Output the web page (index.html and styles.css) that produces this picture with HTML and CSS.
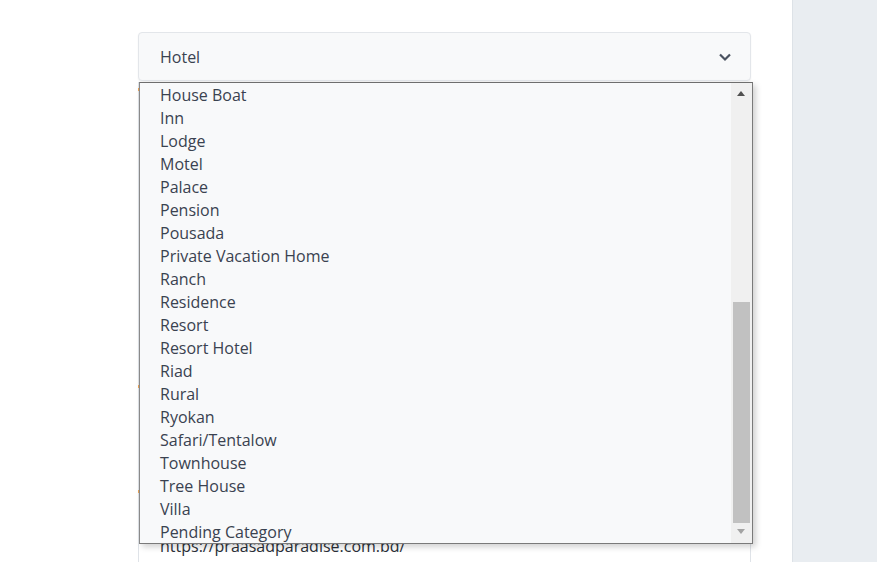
FILE: index.html
```html
<!DOCTYPE html>
<html>
<head>
<meta charset="utf-8">
<link rel="stylesheet" href="styles.css">
</head>
<body>
<div class="page">
  <main class="main">
    <div class="form">
      <div class="select">
        <span>Hotel</span>
        <svg class="chev" width="14" height="10" viewBox="0 0 14 10"><path d="M2 2.5 L7 7.5 L12 2.5" fill="none" stroke="#4a5260" stroke-width="2.2"/></svg>
      </div>
      <div class="field">
        <span class="mark m1"></span>
        <span class="mark m2"></span>
        <span class="mark m3"></span>
        <div class="input">https://praasadparadise.com.bd/</div>
      </div>
      <div class="dropdown">
        <ul class="list">
          <li>House Boat</li>
          <li>Inn</li>
          <li>Lodge</li>
          <li>Motel</li>
          <li>Palace</li>
          <li>Pension</li>
          <li>Pousada</li>
          <li>Private Vacation Home</li>
          <li>Ranch</li>
          <li>Residence</li>
          <li>Resort</li>
          <li>Resort Hotel</li>
          <li>Riad</li>
          <li>Rural</li>
          <li>Ryokan</li>
          <li>Safari/Tentalow</li>
          <li>Townhouse</li>
          <li>Tree House</li>
          <li>Villa</li>
          <li>Pending Category</li>
        </ul>
        <div class="scrollbar">
          <div class="arrow up"></div>
          <div class="track"><div class="thumb"></div></div>
          <div class="arrow down"></div>
        </div>
      </div>
    </div>
  </main>
  <aside class="side"></aside>
</div>
</body>
</html>
```
FILE: styles.css
```css
* { box-sizing: border-box; }
html, body { margin: 0; padding: 0; }
body {
  font-family: "Open Sans", "Liberation Sans", sans-serif;
  color: #3a4250;
  background: #fff;
  width: 877px;
  height: 562px;
  overflow: hidden;
}
.page {
  display: flex;
  height: 562px;
}
.main {
  flex: 0 0 793px;
  border-right: 1px solid #dde2e7;
  padding: 32px 0 0 138px;
}
.side {
  flex: 1;
  background: #e9edf1;
}
.form {
  position: relative;
  width: 613px;
}
.select {
  height: 49px;
  background: #f8f9fa;
  border: 1px solid #e3e6ea;
  border-radius: 4px;
  display: flex;
  align-items: center;
  justify-content: space-between;
  padding: 1px 18px 0 21px;
  font-size: 16px;
  box-shadow: 0 1px 2px rgba(0,0,0,0.06);
}
.chev { display: block; }
.field {
  position: relative;
  margin-top: 1px;
  height: 480px;
  border-left: 1px solid #dfe3e8;
  border-right: 1px solid #dfe3e8;
  display: flex;
  flex-direction: column;
  justify-content: flex-end;
}
.input {
  padding-left: 21px;
  font-size: 16px;
  line-height: 22px;
  margin-bottom: 5px;
  color: #2a2f38;
}
.mark {
  position: absolute;
  left: -1px;
  width: 2px;
  height: 3px;
  background: #e7a35a;
}
.m1 { top: 6px; }
.m2 { top: 303px; }
.m3 { top: 408px; }
.dropdown {
  position: absolute;
  left: 1px;
  top: 50px;
  width: 614px;
  height: 462px;
  background: #f8f9fa;
  border: 1px solid #7a7a7a;
  border-top-color: #6e6e6e;
  border-left-color: #8a8a8a;
  box-shadow: 3px 3px 6px rgba(0,0,0,0.18);
  display: flex;
}
.list {
  flex: 1;
  list-style: none;
  margin: 0;
  padding: 1px 0 0 20px;
  font-size: 16px;
}
.list li {
  height: 23px;
  line-height: 23px;
  white-space: nowrap;
}
.scrollbar {
  flex: 0 0 21px;
  background: #f0f0f0;
  display: flex;
  flex-direction: column;
}
.arrow {
  flex: 0 0 17px;
  position: relative;
}
.arrow::after {
  content: "";
  position: absolute;
  left: 6px;
  top: 8px;
  border-left: 4.5px solid transparent;
  border-right: 4.5px solid transparent;
}
.arrow.up::after { border-bottom: 5px solid #505050; }
.arrow.down::after { border-top: 5px solid #a3a3a3; top: 3px; }
.track {
  flex: 1;
  display: flex;
  flex-direction: column;
  justify-content: flex-end;
  padding: 0 2px 3px;
}
.thumb {
  height: 221px;
  background: #c1c1c1;
}
```
